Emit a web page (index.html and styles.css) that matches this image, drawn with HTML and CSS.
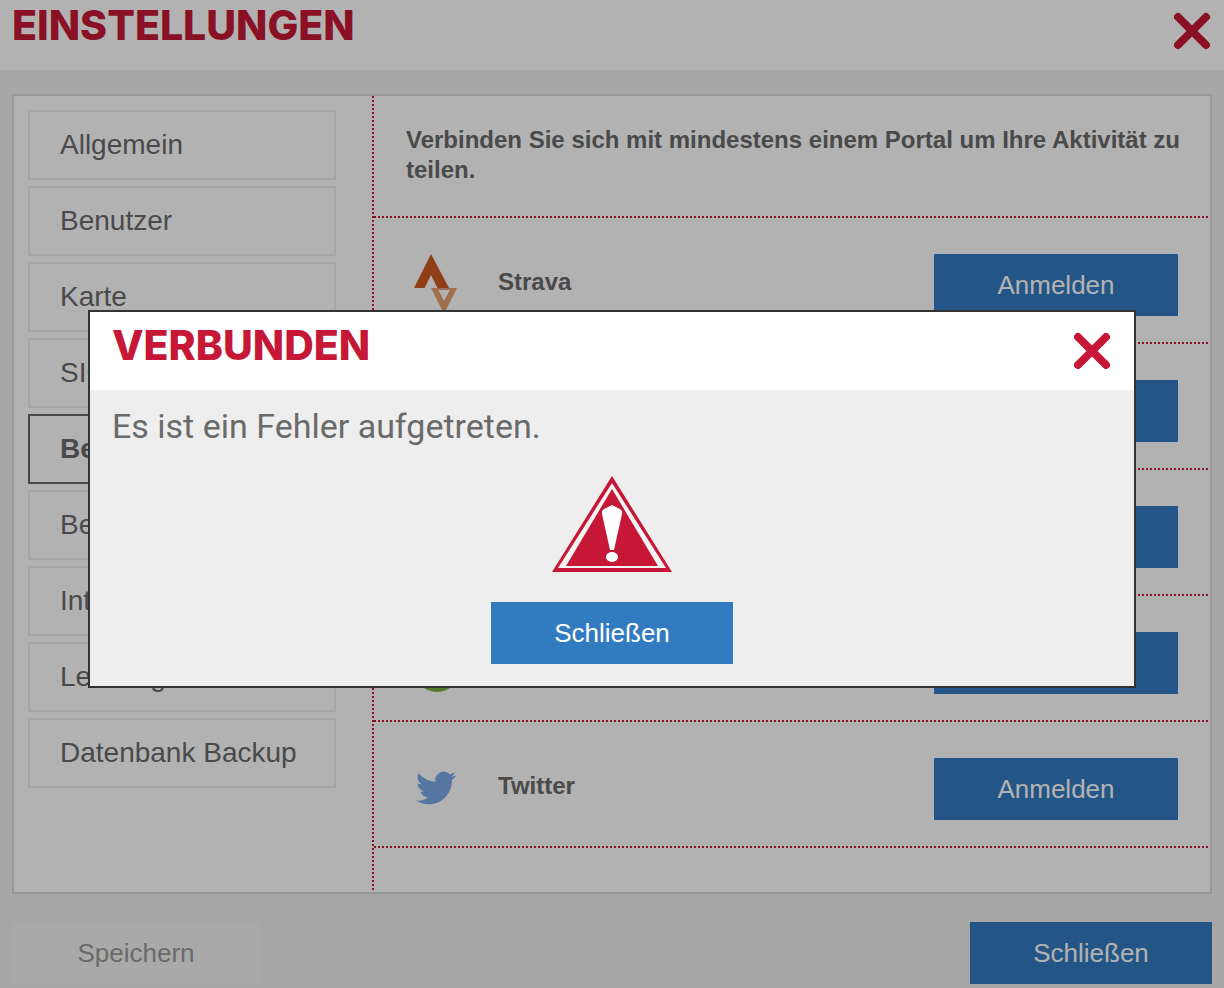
FILE: index.html
```html
<!DOCTYPE html>
<html lang="de">
<head>
    <meta charset="UTF-8">
    <meta name="viewport" content="width=device-width, initial-scale=1.0">
    <title>Einstellungen</title>
    <link rel="stylesheet" href="styles.css">
</head>
<body>

    <header class="title-bar">
        <h1>EINSTELLUNGEN</h1>
        <button class="close" aria-label="Einstellungen schließen">
            <svg viewBox="0 0 38 38"><path d="M4 5L32 33M32 5L4 33"/></svg>
        </button>
    </header>

    <main class="panel">
        <nav class="menu">
            <a href="#">Allgemein</a>
            <a href="#">Benutzer</a>
            <a href="#">Karte</a>
            <a href="#">SIGMA</a>
            <a href="#" class="active">Benutzerportale</a>
            <a href="#">Bereiche</a>
            <a href="#">Internet</a>
            <a href="#">Leistung</a>
            <a href="#">Datenbank Backup</a>
        </nav>

        <section class="portals">
            <p class="intro">Verbinden Sie sich mit mindestens einem Portal um Ihre Aktivität zu teilen.</p>

            <div class="portal">
                <svg class="logo" viewBox="0 0 60 60">
                    <path fill="#cf5a22" d="M25 0L43 34H31.500L25 21L18.500 34H8Z"/>
                    <path fill="#e4a070" fill-rule="evenodd" d="M25 34H51L38 60ZM32.500 36L38 47L44 36Z"/>
                </svg>
                <h2>Strava</h2>
                <button class="btn">Anmelden</button>
            </div>
            <div class="portal">
                <svg class="logo" viewBox="0 0 60 60"><circle cx="31" cy="30" r="22" fill="#005695"/></svg>
                <h2>TrainingPeaks</h2>
                <button class="btn">Anmelden</button>
            </div>
            <div class="portal">
                <svg class="logo" viewBox="0 0 60 60"><rect x="10" y="10" width="40" height="40" fill="#3b5998"/></svg>
                <h2>Facebook</h2>
                <button class="btn">Anmelden</button>
            </div>
            <div class="portal">
                <svg class="logo" viewBox="0 0 60 60"><circle cx="31" cy="37" r="23" fill="#78b440"/></svg>
                <h2>komoot</h2>
                <button class="btn">Anmelden</button>
            </div>
            <div class="portal">
                <svg class="logo" viewBox="-6 -6 36 36">
                    <path fill="#7ca9e8" d="M23.950 4.570a10 10 0 0 1-2.820.780 4.960 4.960 0 0 0 2.160-2.730c-.950.560-2 .960-3.130 1.190a4.920 4.920 0 0 0-8.380 4.480C7.690 8.090 4.070 6.130 1.640 3.160a4.920 4.920 0 0 0 1.520 6.570 4.900 4.900 0 0 1-2.230-.610v.060a4.920 4.920 0 0 0 3.950 4.830 5 5 0 0 1-2.210.080 4.940 4.940 0 0 0 4.600 3.420A9.870 9.870 0 0 1 0 19.540a13.990 13.990 0 0 0 7.550 2.210c9.050 0 14-7.500 14-13.980 0-.210 0-.420-.020-.630a9.940 9.940 0 0 0 2.460-2.550z"/>
                </svg>
                <h2>Twitter</h2>
                <button class="btn">Anmelden</button>
            </div>
        </section>
    </main>

    <footer class="actions">
        <button class="btn btn-save" disabled>Speichern</button>
        <button class="btn">Schließen</button>
    </footer>

    <div class="overlay">
        <div class="dialog" role="dialog" aria-modal="true" aria-labelledby="dialog-title">
            <div class="title-bar dialog-title">
                <h1 id="dialog-title">VERBUNDEN</h1>
                <button class="close" aria-label="Meldung schließen">
                    <svg viewBox="0 0 38 38"><path d="M4 5L32 33M32 5L4 33"/></svg>
                </button>
            </div>
            <div class="dialog-body">
                <p>Es ist ein Fehler aufgetreten.</p>
                <svg class="warning" viewBox="0 0 120 96">
                    <path fill="#c61736" d="M60 0L120 96H0Z"/>
                    <path fill="#f4f4f4" d="M60 7L114 92H6Z"/>
                    <path fill="#c61736" d="M60 13L106 90H14Z"/>
                    <path fill="#fff" d="M60 29L66 32Q71 34 70 38L62 74H58L50 38Q49 34 54 32Z"/>
                    <ellipse fill="#fff" cx="60" cy="81" rx="6" ry="5"/>
                </svg>
                <button class="btn">Schließen</button>
            </div>
        </div>
    </div>

</body>
</html>
```
FILE: styles.css
```css
* {
    box-sizing: border-box;
}

body {
    margin: 0;
    min-height: 100vh;
    display: flex;
    flex-direction: column;
    background-color: #f0f0f0;
    color: #6a6a6a;
    font-family: "Liberation Sans", Arial, sans-serif;
}

h1, h2, p {
    margin: 0;
}

button {
    border: 0;
    padding: 0;
    font-family: inherit;
    cursor: pointer;
}

.title-bar {
    display: flex;
    justify-content: space-between;
    align-items: flex-start;
    padding: 0 12px 20px;
    background-color: #fff;
}

.title-bar h1 {
    color: #c61736;
    font-family: Inter, "Liberation Sans", sans-serif;
    font-size: 41px;
    font-weight: 800;
    line-height: 50px;
}

.close {
    margin-top: 12px;
    height: 38px;
    background: none;
}

.close svg {
    display: block;
    width: 38px;
    height: 38px;
    stroke: #c61736;
    stroke-width: 8;
    stroke-linecap: round;
}

.panel {
    flex: 1;
    display: flex;
    margin: 24px 12px 28px;
    border: 2px solid #d9d9d9;
    background-color: #fff;
}

.menu {
    flex: none;
    width: 358px;
    display: flex;
    flex-direction: column;
    gap: 6px;
    padding: 14px 36px 14px 14px;
}

.menu a {
    height: 70px;
    padding-left: 30px;
    border: 2px solid #eee;
    color: #6a6a6a;
    font-size: 28px;
    line-height: 66px;
    text-decoration: none;
}

.menu .active {
    border-color: #666;
    font-weight: bold;
}

/* square dots, 2px on and 2px off */
.portals {
    flex: 1;
    padding-left: 2px;
    background: repeating-linear-gradient(to bottom, #c61736 0 2px, transparent 2px 4px) left top / 2px 100% no-repeat;
}

.intro, .portal {
    background: repeating-linear-gradient(to right, #c61736 0 2px, transparent 2px 4px) left bottom / 100% 2px no-repeat;
}

.intro {
    padding: 29px 28px 33px 32px;
    font-size: 24px;
    line-height: 30px;
    font-weight: bold;
}

.portal {
    display: flex;
    align-items: flex-start;
    padding: 36px 32px 28px;
}

.logo {
    width: 60px;
    height: 60px;
    margin-right: 32px;
}

.portal h2 {
    flex: 1;
    font-size: 24px;
    line-height: 56px;
}

.btn {
    width: 242px;
    height: 62px;
    background-color: #337bc1;
    color: #fff;
    font-size: 26px;
}

.portal .btn {
    width: 244px;
}

.actions {
    display: flex;
    justify-content: space-between;
    padding: 0 12px 4px;
}

.btn-save {
    width: 248px;
    background-color: #f2f2f2;
    color: #999;
}

.overlay {
    position: fixed;
    inset: 0;
    display: flex;
    align-items: center;
    padding: 10px 88px 0;
    background-color: rgba(0, 0, 0, 0.3);
}

.dialog {
    flex: 1;
    border: 2px solid #333;
    background-color: #eee;
}

.dialog-title {
    padding: 8px 22px 20px;
}

.dialog-body {
    display: flex;
    flex-direction: column;
    align-items: center;
    gap: 30px;
    padding: 16px 22px 22px;
}

.dialog-body p {
    align-self: stretch;
    font-family: Roboto, "Liberation Sans", sans-serif;
    font-size: 34px;
    line-height: 40px;
}

.warning {
    width: 120px;
    height: 96px;
}
```
